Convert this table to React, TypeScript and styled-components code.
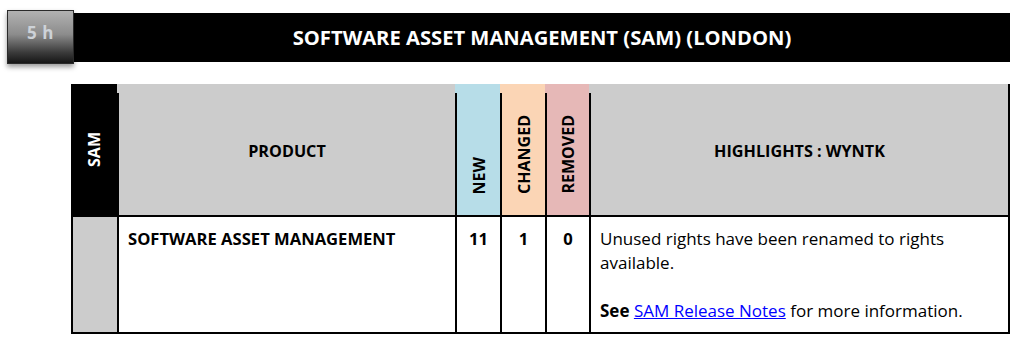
import React from 'react';
import styled, { createGlobalStyle } from 'styled-components';

const GlobalStyle = createGlobalStyle`
    body {
        margin: 0;
        background: #fff;
        font-family: "Open Sans", "Liberation Sans", sans-serif;
        color: #000;
    }
`;

const Page = styled.div`
    padding: 10px 0 0 7px;
`;

const TitleRow = styled.div`
    display: flex;
    align-items: center;
    width: 1003px;
`;

const Badge = styled.div`
    box-sizing: border-box;
    width: 67px;
    height: 54px;
    border: 1px solid #2a2a2a;
    background: linear-gradient(#b2b2b2 0%, #8c8c8c 45%, #3a3a3a 80%, #161616 100%);
    box-shadow: 0 3px 5px rgba(0, 0, 0, 0.4);
    color: #cdd2d8;
    font-weight: 700;
    font-size: 17px;
    line-height: 20px;
    letter-spacing: 0.5px;
    display: flex;
    justify-content: center;
    padding-top: 12px;
    position: relative;
    z-index: 1;
`;

const TitleBar = styled.div`
    flex: 1;
    height: 49px;
    background: #000;
    color: #fff;
    font-weight: 700;
    font-size: 20.2px;
    display: flex;
    align-items: center;
    justify-content: center;
`;

const Table = styled.div`
    margin: 20px 0 0 64px;
    display: grid;
    grid-template-columns: 46px 338px 45px 45px 44px 419px;
    width: 937px;
    border-right: 2px solid #000;
    border-bottom: 2px solid #000;
`;

const SideHead = styled.div`
    background: #000;
    height: 131px;
    display: flex;
    align-items: center;
    justify-content: center;
`;

const Vertical = styled.span<{ light?: boolean }>`
    writing-mode: vertical-rl;
    transform: rotate(180deg);
    font-weight: 700;
    font-size: 16px;
    color: ${props => props.light ? '#fff' : '#000'};
`;

const HeadCell = styled.div<{ bg: string }>`
    background: ${props => props.bg};
    height: 131px;
    box-sizing: border-box;
    padding-top: 9px;
    display: flex;
`;

const HeadInner = styled.div<{ bottom?: boolean }>`
    flex: 1;
    border-left: 2px solid #000;
    display: flex;
    justify-content: center;
    align-items: ${props => props.bottom ? 'flex-end' : 'center'};
    padding-bottom: ${props => props.bottom ? '21px' : '6px'};
    font-weight: 700;
    font-size: 16.2px;
`;

const BodyCell = styled.div<{ first?: boolean; center?: boolean; bold?: boolean }>`
    box-sizing: border-box;
    height: 117px;
    border-top: 2px solid #000;
    border-left: 2px solid #000;
    background: ${props => props.first ? '#cccccc' : '#fff'};
    padding: 10px 9px;
    line-height: 24px;
    font-size: ${props => props.bold ? '16.6px' : '17px'};
    font-weight: ${props => props.bold ? 700 : 400};
    text-align: ${props => props.center ? 'center' : 'left'};
`;

const Para = styled.p`
    margin: 0 0 24px 0;
    padding-right: 8px;
    &:last-child {
        margin-bottom: 0;
    }
`;

const Link = styled.a`
    color: #0000ff;
    text-decoration: underline;
`;

const App: React.FC = () => {
    const counts = [
        { key: 'new', label: 'NEW', bg: '#b7dde8', value: 11 },
        { key: 'changed', label: 'CHANGED', bg: '#fbd5b5', value: 1 },
        { key: 'removed', label: 'REMOVED', bg: '#e6b8b7', value: 0 },
    ];

    return (
        <React.Fragment>
            <GlobalStyle />
            <Page>
                <TitleRow>
                    <Badge>5 h</Badge>
                    <TitleBar>SOFTWARE ASSET MANAGEMENT (SAM) (LONDON)</TitleBar>
                </TitleRow>
                <Table>
                    <SideHead><Vertical light>SAM</Vertical></SideHead>
                    <HeadCell bg="#cccccc"><HeadInner>PRODUCT</HeadInner></HeadCell>
                    {counts.map(c =>
                        <HeadCell bg={c.bg} key={c.key}>
                            <HeadInner bottom><Vertical>{c.label}</Vertical></HeadInner>
                        </HeadCell>)}
                    <HeadCell bg="#cccccc"><HeadInner>HIGHLIGHTS : WYNTK</HeadInner></HeadCell>

                    <BodyCell first />
                    <BodyCell bold>SOFTWARE ASSET MANAGEMENT</BodyCell>
                    {counts.map(c =>
                        <BodyCell bold center key={c.key}>{c.value}</BodyCell>)}
                    <BodyCell>
                        <Para>Unused rights have been renamed to rights available.</Para>
                        <Para><b>See</b> <Link href="#">SAM Release Notes</Link> for more information.</Para>
                    </BodyCell>
                </Table>
            </Page>
        </React.Fragment>
    );
};

export default App;
